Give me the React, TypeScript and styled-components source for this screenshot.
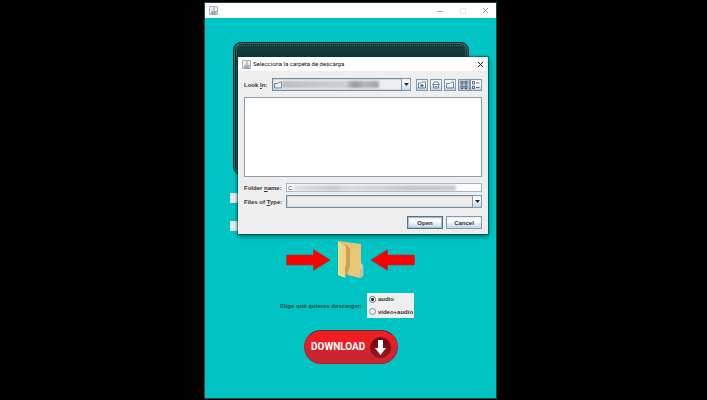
import React, { useState } from "react";
import styled, { createGlobalStyle, css } from "styled-components";

const GlobalStyle = createGlobalStyle`
  * { box-sizing: border-box; }
  body { margin: 0; background: #000; }
  button, input, select { font: inherit; color: inherit; margin: 0; padding: 0; border-radius: 0; }
`;

const Desktop = styled.main`
  min-height: 100vh;
  padding: 2px 0 1px;
  display: grid;
  grid-template-columns: 204fr 293fr 210fr;
  background: #000;
  font: bold 6px/8px "Liberation Sans", Arial, sans-serif;
  color: #333;
`;

const Frame = styled.section`
  grid-column: 2;
  position: relative;
  display: flex;
  flex-direction: column;
  border: 1px solid #16494a;
  background: #00c4c4;
`;

const TitleBar = styled.header<{ $tall?: boolean }>`
  display: flex;
  align-items: center;
  height: ${(p) => (p.$tall ? 15 : 14)}px;
  padding: 0 4px;
  background: #fff;
`;

const WindowTitle = styled.h1`
  flex: 1;
  margin: 0 0 0 2px;
  font: 6px/8px Roboto, "Noto Sans", sans-serif;
  color: #111;
`;

const WindowButton = styled.button<{ $tone: string; $wide?: boolean }>`
  display: grid;
  place-items: center;
  width: ${(p) => (p.$wide ? 23 : 8)}px;
  height: 12px;
  border: 0;
  background: none;
  color: ${(p) => p.$tone};
`;

const WindowControls = styled.div`
  display: flex;
  margin-left: auto;
  margin-right: -5px;
`;

const Content = styled.div`
  flex: 1;
  display: flex;
  flex-direction: column;
  padding: 24px 27px 0 28px;
`;

const Board = styled.div`
  height: 133px;
  padding: 2px;
  border: 1px solid #062625;
  border-radius: 8px;
  background: #426d6b;
`;

const BoardInner = styled.div`
  height: 100%;
  border: 1px dotted #4a7876;
  border-radius: 6px;
  background: #123a3a;
  outline: 1px solid #0c2c2c;
`;

const Fields = styled.div`
  display: grid;
  gap: 18px;
  margin: 18px 20px 0 -3px;
`;

const PlainField = styled.input`
  width: 100%;
  height: 10px;
  border: 1px solid #d4e4e4;
  background: #eee;
`;

const FolderRow = styled.div`
  display: flex;
  justify-content: center;
  align-items: center;
  gap: 6px;
  margin-top: 9px;
  padding-right: 2px;
`;

const FolderButton = styled.button`
  display: block;
  width: 27px;
  height: 40px;
  border: 0;
  background: none;
`;

const ChoiceRow = styled.fieldset`
  display: flex;
  justify-content: center;
  align-items: center;
  gap: 5px;
  margin: 13px 0 0;
  padding: 0 8px 0 0;
  border: 0;
  min-width: 0;
`;

const ChoiceTitle = styled.span`
  color: #174648;
  white-space: nowrap;
`;

const Choices = styled.div`
  display: grid;
  height: 25px;
  padding: 0 1px 0 2px;
  background: #eee;
`;

const Choice = styled.label`
  display: flex;
  align-items: center;
  gap: 2px;
`;

const Radio = styled.input`
  appearance: none;
  width: 7px;
  height: 7px;
  border: 1px solid #7289a0;
  border-radius: 50%;
  background: #f8fbfd;
  &:checked { background: radial-gradient(circle, #222 0 1px, #e8eef4 2px); border-color: #66727e; }
`;

const Download = styled.button`
  display: flex;
  align-items: center;
  justify-content: space-between;
  align-self: center;
  width: 94px;
  height: 34px;
  margin-top: 12px;
  padding: 0 6px;
  border: 1px solid #b61f2b;
  border-top-color: #5d3034;
  border-radius: 17px;
  background: linear-gradient(#ef1c24 0 48%, #cb2531 56% 100%);
  color: #fff;
  font: bold 10px/16px Roboto, "Liberation Sans", sans-serif;
  svg { flex: none; }
`;

const Dialog = styled.section`
  position: absolute;
  top: 54px;
  left: 33px;
  right: 8px;
  background: #eee;
  box-shadow: 0 0 1px 1px rgba(0, 55, 55, 0.45), 0 2px 5px rgba(0, 30, 30, 0.6);
`;

const DialogBody = styled.div`
  display: flex;
  flex-direction: column;
  padding: 7px 6px 5px;
`;

const LookRow = styled.div`
  display: flex;
  align-items: center;
`;

const LookLabel = styled.label`
  width: 28px;
  white-space: nowrap;
`;

const SelectBox = styled.div`
  position: relative;
  flex: 1;
  height: 13px;
`;

const Select = styled.select`
  appearance: none;
  display: block;
  width: 100%;
  height: 100%;
  border: 1px solid #7a8a99;
  background: #eee;
  box-shadow: inset 0 0 0 1px #cbd9e7;
`;

const steel = css`
  border: 1px solid #8498ab;
  background: linear-gradient(#e6eef6, #fff 35%, #c0d3e5);
`;

const Arrow = styled.span`
  ${steel}
  position: absolute;
  inset: 0 0 0 auto;
  width: 10px;
  display: grid;
  place-items: center;
  pointer-events: none;
`;

const SelectIcon = styled.span`
  position: absolute;
  top: 3px;
  left: 2px;
  display: flex;
`;

const Smear = styled.span<{ $left: number; $right: number; $dark?: boolean }>`
  position: absolute;
  top: ${(p) => (p.$dark ? 3 : 2)}px;
  bottom: ${(p) => (p.$dark ? 3 : 1)}px;
  left: ${(p) => p.$left}px;
  right: ${(p) => p.$right}px;
  background: ${(p) =>
    p.$dark
      ? "linear-gradient(90deg, #bbb, #c9c9c9 40%, #cfcfcf 65%, #989898 75%, #b4b4b4 85%, #a6a6a6)"
      : "linear-gradient(90deg, #e2e2e2, #cacaca 25%, #dcdcdc 35%, #c8c8c8 70%, #ccc)"};
  filter: blur(1px);
  pointer-events: none;
`;

const Tools = styled.div`
  display: flex;
  gap: 2px;
  margin-left: 5px;
`;

const ViewPair = styled.div`
  display: flex;
`;

const Tool = styled.button<{ $on?: boolean }>`
  ${steel}
  display: grid;
  place-items: center;
  width: 12px;
  height: 12px;
  ${(p) => p.$on && "background: #b3c9df;"}
`;

const FileList = styled.div`
  height: 80px;
  margin: 6px 0;
  border: 1px solid #8c9baa;
  background: #fff;
`;

const Form = styled.div`
  display: grid;
  grid-template-columns: 42px 1fr;
  align-items: center;
  row-gap: 3px;
  white-space: nowrap;
`;

const NameBox = styled.div`
  position: relative;
  height: 9px;
`;

const NameInput = styled.input`
  display: block;
  width: 100%;
  height: 100%;
  padding-left: 1px;
  border: 1px solid #a3b4c4;
  background: #fff;
  font-weight: normal;
`;

const Actions = styled.div`
  display: flex;
  justify-content: flex-end;
  gap: 3px;
  margin-top: 8px;
`;

const Action = styled.button<{ $primary?: boolean }>`
  ${steel}
  width: 36px;
  height: 13px;
  ${(p) => p.$primary && "border-color: #5c7186; box-shadow: inset 0 0 0 1px #a9bccd;"}
`;

const JavaIcon = () => (
  <svg width="9" height="9" viewBox="0 0 18 18" aria-hidden="true">
    <rect x="1" y="1" width="16" height="16" rx="1" fill="#edf1f5" stroke="#8a9bab" strokeWidth="1.5" />
    <path d="M10 2c2 3-4 4-1 8M12 5c-3 2-2 3-1 5" fill="none" stroke="#e28a4e" strokeWidth="1.6" />
    <path d="M4 11c2 1 7 1 9 0M13 10c3 0 2 3-1 3M5 13c2 1 5 1 7 0M3 15c3 1 9 1 12 0" fill="none" stroke="#517b9c" strokeWidth="1.4" />
  </svg>
);

const Cross = () => (
  <svg width="7" height="7" viewBox="0 0 7 7" aria-hidden="true">
    <path d="M1 1l5 5M6 1L1 6" stroke="currentColor" />
  </svg>
);

const DownTriangle = () => (
  <svg width="5" height="3" viewBox="0 0 5 3" aria-hidden="true">
    <path d="M0 0h5L2.5 3z" fill="#222" />
  </svg>
);

const toolPaths = {
  up: <><path d="M1 14V4h6l2-2h6v12z" /><path d="M8 12V7M5 10l3-3 3 3" strokeWidth="2.4" /></>,
  home: <><path d="M1 7l4-5h7l3 5zM3 7v7h10V7" /><path d="M6 11h4" /></>,
  folder: <path d="M1 14V5h7l3-3h4v12z" />,
  grid: <path d="M2 1h4v5H2zM10 1h4v5h-4zM2 10h4v5H2zM10 10h4v5h-4z" />,
  list: <path d="M1 1h4v5H1zM1 10h4v5H1zM8 4h7M8 13h7" />,
};

const ToolIcon = ({ name }: { name: keyof typeof toolPaths }) => (
  <svg width="8" height="8" viewBox="0 0 16 16" fill="none" stroke={name === "grid" || name === "list" ? "#49535e" : "#526f8d"} strokeWidth="1.7" aria-hidden="true">
    {toolPaths[name]}
  </svg>
);

const RedArrow = ({ left }: { left?: boolean }) => (
  <svg width="45" height="22" viewBox="0 0 45 22" aria-hidden="true">
    <path d={left ? "M44.5 6H17.5V.5L.8 11l16.7 10.5V16h27z" : "M.5 6h27V.5L44.2 11 27.5 21.5V16H.5z"} fill="#f00" stroke="#8f3e3a" strokeWidth=".6" />
  </svg>
);

const FolderPicture = () => (
  <svg width="27" height="40" viewBox="1 0 27 40" aria-hidden="true">
    <defs>
      <linearGradient id="folderFront" x1="0" x2="1">
        <stop offset="0" stopColor="#f2dc91" />
        <stop offset="1" stopColor="#efd181" />
      </linearGradient>
    </defs>
    <path d="M2 1l23 3v19l2 2v11l-3 2-12-3z" fill="#e8c675" />
    <path d="M2 1l10 5 2 3v18l-5 11z" fill="#c9a157" />
    <path d="M2 1l8 5v19l-1 2v11L2 35z" fill="url(#folderFront)" />
    <path d="M24 24l3 1v11l-3 2z" fill="#e4cf87" />
    <path d="M27 25v11l-2 1v-8" fill="none" stroke="#8abdd0" />
  </svg>
);

const DownloadPicture = () => (
  <svg width="21" height="21" viewBox="0 0 21 21" aria-hidden="true">
    <defs>
      <linearGradient id="disc" x1="0" y1="0" x2="0" y2="1">
        <stop offset="0" stopColor="#5f0a0e" />
        <stop offset="1" stopColor="#a31620" />
      </linearGradient>
    </defs>
    <circle cx="10.500" cy="10.500" r="10" fill="url(#disc)" stroke="#801018" />
    <path d="M8 3h5v8h3l-5.500 7L5 11h3z" fill="#fff" />
  </svg>
);

export default function App() {
  const [kind, setKind] = useState("audio");
  return (
    <>
      <GlobalStyle />
      <Desktop>
        <Frame>
          <TitleBar $tall>
            <JavaIcon />
            <WindowControls>
              <WindowButton $tone="#aaa" $wide aria-label="Minimize">
                <svg width="6" height="6" viewBox="0 0 6 6"><path d="M0 3.500h6" stroke="currentColor" /></svg>
              </WindowButton>
              <WindowButton $tone="#e6e6e6" $wide aria-label="Maximize">
                <svg width="6" height="6" viewBox="0 0 6 6"><path d="M.5.500h5v5h-5z" fill="none" stroke="currentColor" /></svg>
              </WindowButton>
              <WindowButton $tone="#999" $wide aria-label="Close"><Cross /></WindowButton>
            </WindowControls>
          </TitleBar>
          <Content>
            <Board><BoardInner /></Board>
            <Fields>
              <PlainField aria-label="URL" />
              <PlainField aria-label="Carpeta" />
            </Fields>
            <FolderRow>
              <RedArrow />
              <FolderButton aria-label="Carpeta de descarga"><FolderPicture /></FolderButton>
              <RedArrow left />
            </FolderRow>
            <ChoiceRow aria-labelledby="choice-title">
              <ChoiceTitle id="choice-title">Elige qué quieres descargar:</ChoiceTitle>
              <Choices>
                {["audio", "video+audio"].map((k) => (
                  <Choice key={k}>
                    <Radio type="radio" name="kind" checked={kind === k} onChange={() => setKind(k)} />
                    {k}
                  </Choice>
                ))}
              </Choices>
            </ChoiceRow>
            <Download>DOWNLOAD<DownloadPicture /></Download>
          </Content>
          <Dialog role="dialog" aria-labelledby="dialog-title">
            <TitleBar>
              <JavaIcon />
              <WindowTitle id="dialog-title">Selecciona la carpeta de descarga</WindowTitle>
              <WindowButton $tone="#222" aria-label="Close"><Cross /></WindowButton>
            </TitleBar>
            <DialogBody>
              <LookRow>
                <LookLabel htmlFor="look">Look <u>I</u>n:</LookLabel>
                <SelectBox>
                  <Select id="look" />
                  <SelectIcon><ToolIcon name="folder" /></SelectIcon>
                  <Smear $left={10} $right={32} $dark />
                  <Arrow><DownTriangle /></Arrow>
                </SelectBox>
                <Tools>
                  <Tool aria-label="Up one level"><ToolIcon name="up" /></Tool>
                  <Tool aria-label="Home"><ToolIcon name="home" /></Tool>
                  <Tool aria-label="New folder"><ToolIcon name="folder" /></Tool>
                  <ViewPair>
                    <Tool $on aria-label="List"><ToolIcon name="grid" /></Tool>
                    <Tool aria-label="Details"><ToolIcon name="list" /></Tool>
                  </ViewPair>
                </Tools>
              </LookRow>
              <FileList />
              <Form>
                <label htmlFor="name">Folder <u>n</u>ame:</label>
                <NameBox>
                  <NameInput id="name" defaultValue="C" />
                  <Smear $left={7} $right={26} />
                </NameBox>
                <label htmlFor="type">Files of <u>T</u>ype:</label>
                <SelectBox>
                  <Select id="type" />
                  <Arrow><DownTriangle /></Arrow>
                </SelectBox>
              </Form>
              <Actions>
                <Action $primary>Open</Action>
                <Action>Cancel</Action>
              </Actions>
            </DialogBody>
          </Dialog>
        </Frame>
      </Desktop>
    </>
  );
}
